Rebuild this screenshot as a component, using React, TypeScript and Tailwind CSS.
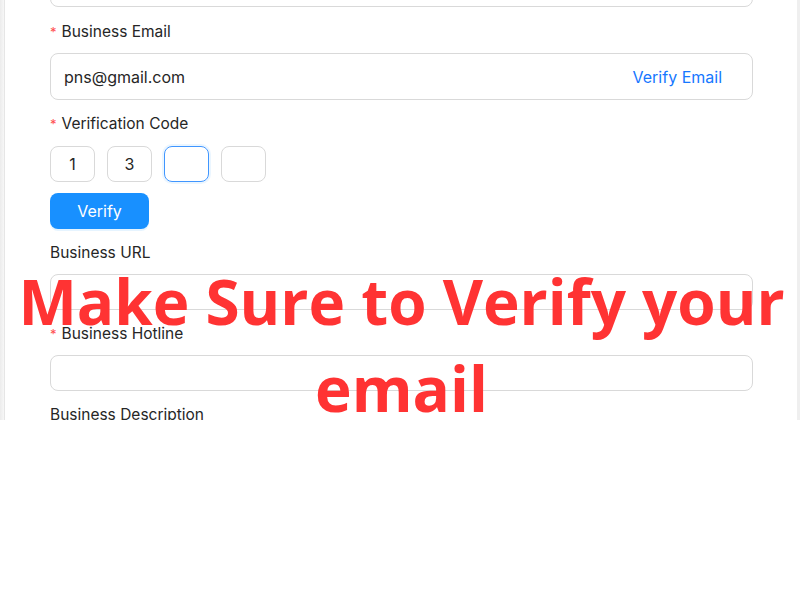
import React from 'react';

const font = { fontFamily: 'Inter, "Noto Sans", sans-serif' };

function Label({ text, required }: { text: string; required?: boolean }) {
  return (
    <div className="h-[22px] shrink-0 leading-[22px] text-[15.5px] text-[#262626] flex items-center">
      {required && <span className="text-[#ff4d4f] text-[13px] mr-[5px] leading-none">*</span>}
      <span>{text}</span>
    </div>
  );
}

const box = 'shrink-0 border border-[#d9d9d9] rounded-lg';

export default function App() {
  const code = ['1', '3', '', ''];

  return (
    <div className="w-[800px] h-[600px] bg-white relative" style={font}>
      {/* Form panel */}
      <div className="h-[420px] overflow-hidden flex bg-white">
        <div className="w-[5px] bg-gradient-to-r from-[#ececec] to-[#f7f7f7] border-r border-[#e6e6e6]" />
        <div className="flex-1 flex flex-col pl-[45px] pr-[44px] -mt-[29px]">
          <div className={`h-[36px] ${box}`} />

          <div className="mt-[14px]">
            <Label text="Business Email" required />
          </div>
          <div className={`mt-[10px] h-[47px] ${box} flex items-center justify-between pl-[13px] pr-[30px] text-[16px]`}>
            <span className="text-[#262626]">pns@gmail.com</span>
            <span className="text-[#1677ff]">Verify Email</span>
          </div>

          <div className="mt-[13px]">
            <Label text="Verification Code" required />
          </div>
          <div className="mt-[11px] shrink-0 flex gap-[12px]">
            {code.map((c, i) => (
              <div
                key={i}
                className={
                  i === 2
                    ? 'w-[45px] h-[36px] rounded-lg border border-[#4096ff] shadow-[0_0_0_2px_rgba(5,145,255,0.08)] flex items-center justify-center text-[16px] text-[#262626]'
                    : 'w-[45px] h-[36px] rounded-lg border border-[#d9d9d9] flex items-center justify-center text-[16px] text-[#262626]'
                }
              >
                {c}
              </div>
            ))}
          </div>
          <button className="mt-[11px] shrink-0 w-[99px] h-[36px] rounded-lg bg-[#1890ff] text-white text-[16px] shadow-[0_2px_0_rgba(5,145,255,0.1)]">
            Verify
          </button>

          <div className="mt-[13px]">
            <Label text="Business URL" />
          </div>
          <div className={`mt-[10px] h-[36px] ${box}`} />

          <div className="mt-[13px]">
            <Label text="Business Hotline" required />
          </div>
          <div className={`mt-[10px] h-[36px] ${box}`} />

          <div className="mt-[13px]">
            <Label text="Business Description" />
          </div>
        </div>
        <div className="w-[3px] bg-[#efefef]" />
      </div>

      {/* Overlay caption */}
      <div
        className="absolute left-0 right-0 top-[258px] pl-[3px] text-center text-[#ff3333] font-bold text-[62px] leading-[87px]"
        style={{ fontFamily: '"Open Sans", sans-serif' }}
      >
        Make Sure to Verify your
        <br />
        email
      </div>
    </div>
  );
}
